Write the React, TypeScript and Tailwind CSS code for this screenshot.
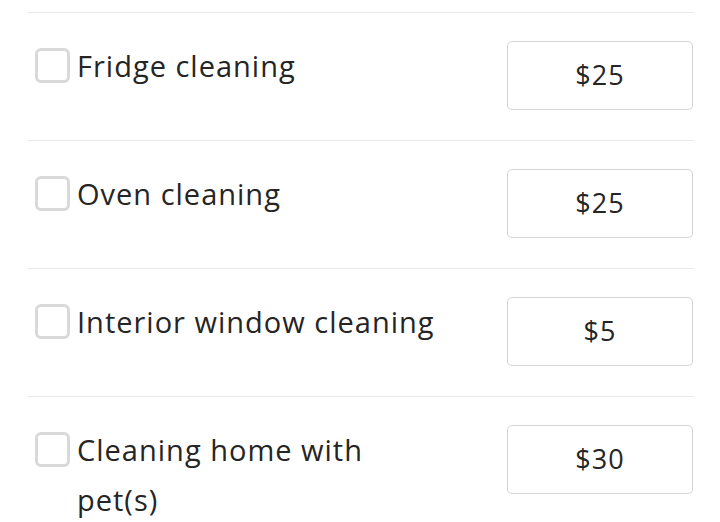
import React from "react";

const items = [
  { label: "Fridge cleaning", price: "$25" },
  { label: "Oven cleaning", price: "$25" },
  { label: "Interior window cleaning", price: "$5" },
  { label: "Cleaning home with pet(s)", price: "$30" },
];

export default function App() {
  return (
    <div
      className="w-[720px] h-[522px] overflow-hidden bg-white pt-[12px]"
      style={{ fontFamily: "'Open Sans', 'Noto Sans', sans-serif" }}
    >
      <div className="ml-[28px] w-[666px]">
        {items.map((it) => (
          <div
            key={it.label}
            className="flex items-start justify-between border-t border-[#e9e9e9] pt-[28px] pb-[30px]"
          >
            <div className="flex items-start pl-[7px]">
              <div className="mt-[7px] h-[35px] w-[35px] shrink-0 rounded-[6px] border-[3px] border-[#d9d9d9] bg-white" />
              <div className="ml-[7px] w-[375px] text-[29px] leading-[50px] text-[#252525] tracking-[1px]">
                {it.label}
              </div>
            </div>
            <div className="mr-[1px] flex h-[69px] w-[186px] shrink-0 items-center justify-center rounded-[5px] border border-[#d4d4d4] text-[27px] tracking-[1px] text-[#252525]">
              {it.price}
            </div>
          </div>
        ))}
      </div>
    </div>
  );
}
